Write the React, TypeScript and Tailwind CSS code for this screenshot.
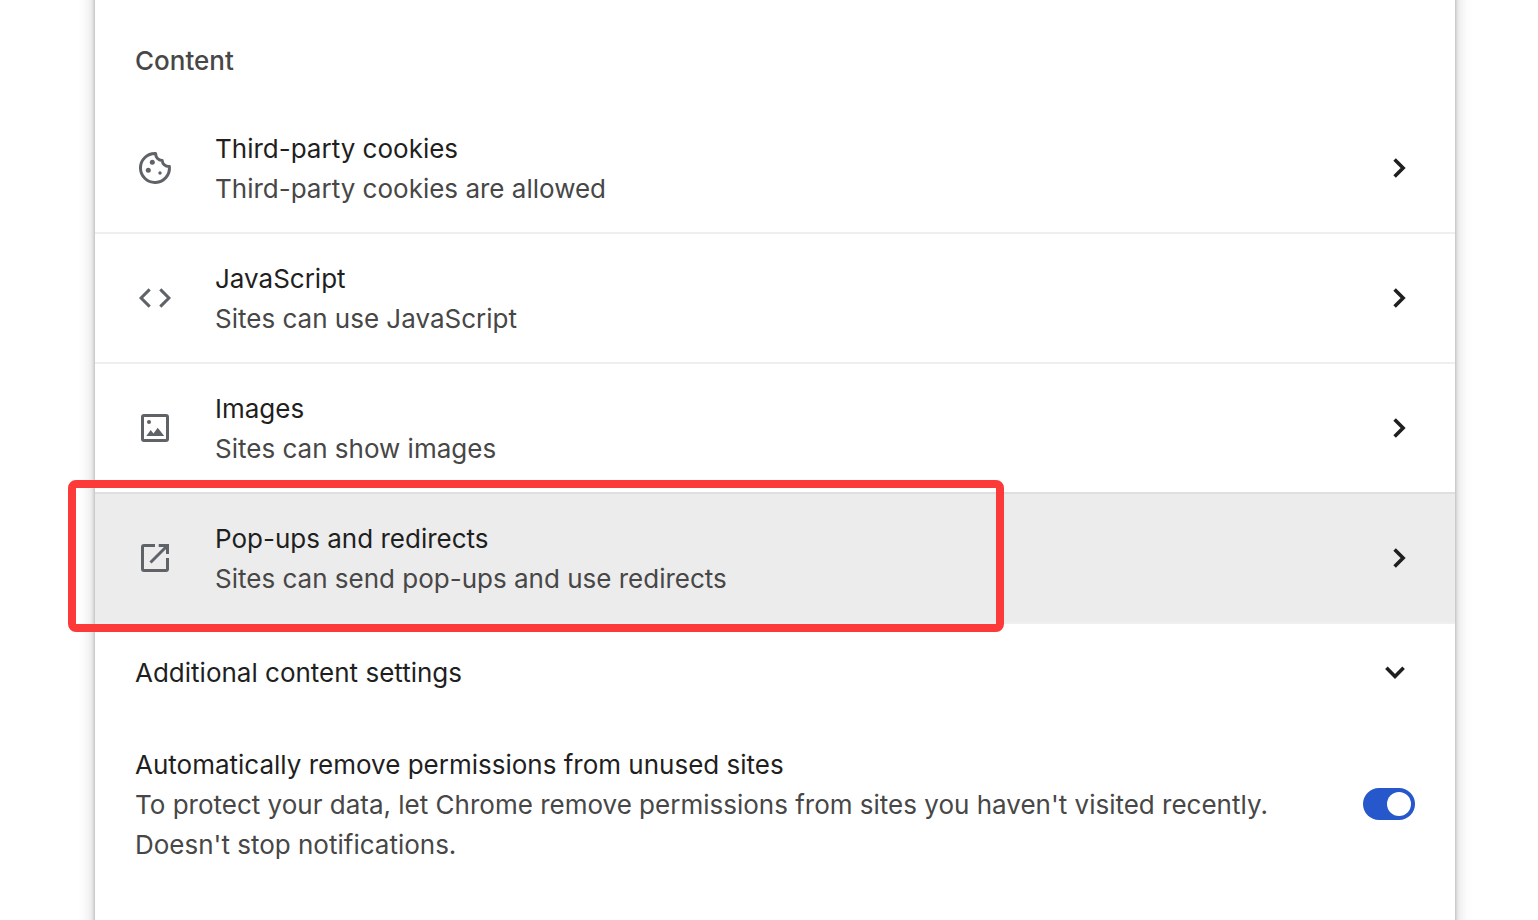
import { useState, type ReactNode } from "react";

type ContentItem = {
  id: string;
  title: string;
  subtitle: string;
  icon: ReactNode;
  highlighted?: boolean;
};

function RowIcon({ children }: { children: ReactNode }) {
  return (
    <svg
      viewBox="0 0 40 40"
      fill="none"
      stroke="currentColor"
      strokeWidth="3"
      aria-hidden="true"
      className="h-10 w-10 shrink-0 text-[#5f6368]"
    >
      {children}
    </svg>
  );
}

function Chevron({ d }: { d: string }) {
  return (
    <svg
      viewBox="0 0 40 40"
      fill="none"
      stroke="currentColor"
      strokeWidth="3.6"
      aria-hidden="true"
      className="h-10 w-10 shrink-0 text-[#1f1f1f]"
    >
      <path d={d} />
    </svg>
  );
}

const items: ContentItem[] = [
  {
    id: "cookies",
    title: "Third-party cookies",
    subtitle: "Third-party cookies are allowed",
    icon: (
      <RowIcon>
        <path
          strokeLinejoin="round"
          d="M34.4 18.6A14.5 14.5 0 1 1 20.6 5.5C20.7 9.6 23.4 12.6 27.2 12.5C27.4 16 30.4 18.9 34.4 18.6Z"
        />
        <g fill="currentColor" stroke="none">
          <circle cx="17.3" cy="14.3" r="2.5" />
          <circle cx="13.3" cy="22.3" r="2.5" />
          <circle cx="25" cy="25" r="1.7" />
        </g>
      </RowIcon>
    ),
  },
  {
    id: "javascript",
    title: "JavaScript",
    subtitle: "Sites can use JavaScript",
    icon: (
      <RowIcon>
        <path d="M14.7 11.4L6.1 20l8.6 8.6M25.3 11.4l8.6 8.6-8.6 8.6" />
      </RowIcon>
    ),
  },
  {
    id: "images",
    title: "Images",
    subtitle: "Sites can show images",
    icon: (
      <RowIcon>
        <rect x="7.5" y="7.5" width="25" height="25" rx="1.5" />
        <g fill="currentColor" stroke="none">
          <circle cx="14" cy="14" r="2" />
          <path d="M11.3 28l4.4-6 2.8 3.4 4.2-5.6 6.5 8.2z" />
        </g>
      </RowIcon>
    ),
  },
  {
    id: "popups",
    title: "Pop-ups and redirects",
    subtitle: "Sites can send pop-ups and use redirects",
    highlighted: true,
    icon: (
      <RowIcon>
        <path d="M20 7.5H9A1.5 1.5 0 0 0 7.5 9v22A1.5 1.5 0 0 0 9 32.5h22a1.5 1.5 0 0 0 1.5-1.5V20" />
        <path d="M23.7 7.5h8.8V16M32 8L15.5 24.5" />
      </RowIcon>
    ),
  },
];

function ContentRow({ item }: { item: ContentItem }) {
  return (
    <li
      className={`relative border-b-2 ${
        item.highlighted ? "border-[#efefef] bg-[#ececec]" : "border-[#efefef] nth-3:border-[#dfdfdf]"
      }`}
    >
      <button type="button" className="flex min-h-32 w-full items-center px-10 py-5 text-left">
        {item.icon}
        <span className="ml-10 min-w-0 flex-1 pt-0.5">
          <span className="block text-[#1f1f1f]">{item.title}</span>
          <span className="block text-[#474747]">{item.subtitle}</span>
        </span>
        <Chevron d="M19.6 11.5l8.5 8.5-8.5 8.5" />
      </button>
      {item.highlighted && (
        <div className="pointer-events-none absolute -top-3.5 -bottom-2.5 -left-[27px] w-[936px] rounded-lg border-8 border-[#fd3a3a]" />
      )}
    </li>
  );
}

export default function App() {
  const [autoRemove, setAutoRemove] = useState(true);

  return (
    <div className="min-h-screen overflow-hidden bg-white font-['Inter','Liberation_Sans',sans-serif] text-[26px] leading-10">
      {/* The card runs past the top and bottom of the window */}
      <main className="-my-8 mr-[83px] ml-[95px] min-h-[calc(100vh+64px)] bg-white pt-8 shadow-[0_2px_4px_rgba(60,60,60,0.4),0_4px_12px_4px_rgba(60,60,60,0.17)]">
        <h2 className="flex h-26 items-center px-10 pt-[18px] font-medium text-[#474747]">Content</h2>

        <ul>
          {items.map((item) => (
            <ContentRow key={item.id} item={item} />
          ))}
        </ul>

        <button type="button" className="flex min-h-24 w-full items-center justify-between px-10 py-5 text-left text-[#1f1f1f]">
          <span className="pt-0.5">Additional content settings</span>
          <Chevron d="M11.4 15.8l8.6 8.6 8.6-8.6" />
        </button>

        {/* Unused site permissions */}
        <div className="flex min-h-42 items-center justify-between px-10 py-5">
          <label htmlFor="auto-remove" className="max-w-[1160px] pt-0.5">
            <span className="block text-[#1f1f1f]">Automatically remove permissions from unused sites</span>
            <span className="block text-[#474747]">
              To protect your data, let Chrome remove permissions from sites you haven't visited recently.
              <br />
              Doesn't stop notifications.
            </span>
          </label>
          <input
            id="auto-remove"
            type="checkbox"
            role="switch"
            checked={autoRemove}
            onChange={(e) => setAutoRemove(e.target.checked)}
            className="flex h-8 w-[52px] shrink-0 appearance-none items-center rounded-full bg-[#80868b] px-1 before:h-6 before:w-6 before:rounded-full before:bg-white checked:justify-end checked:bg-[#2657cb]"
          />
        </div>
      </main>
    </div>
  );
}
